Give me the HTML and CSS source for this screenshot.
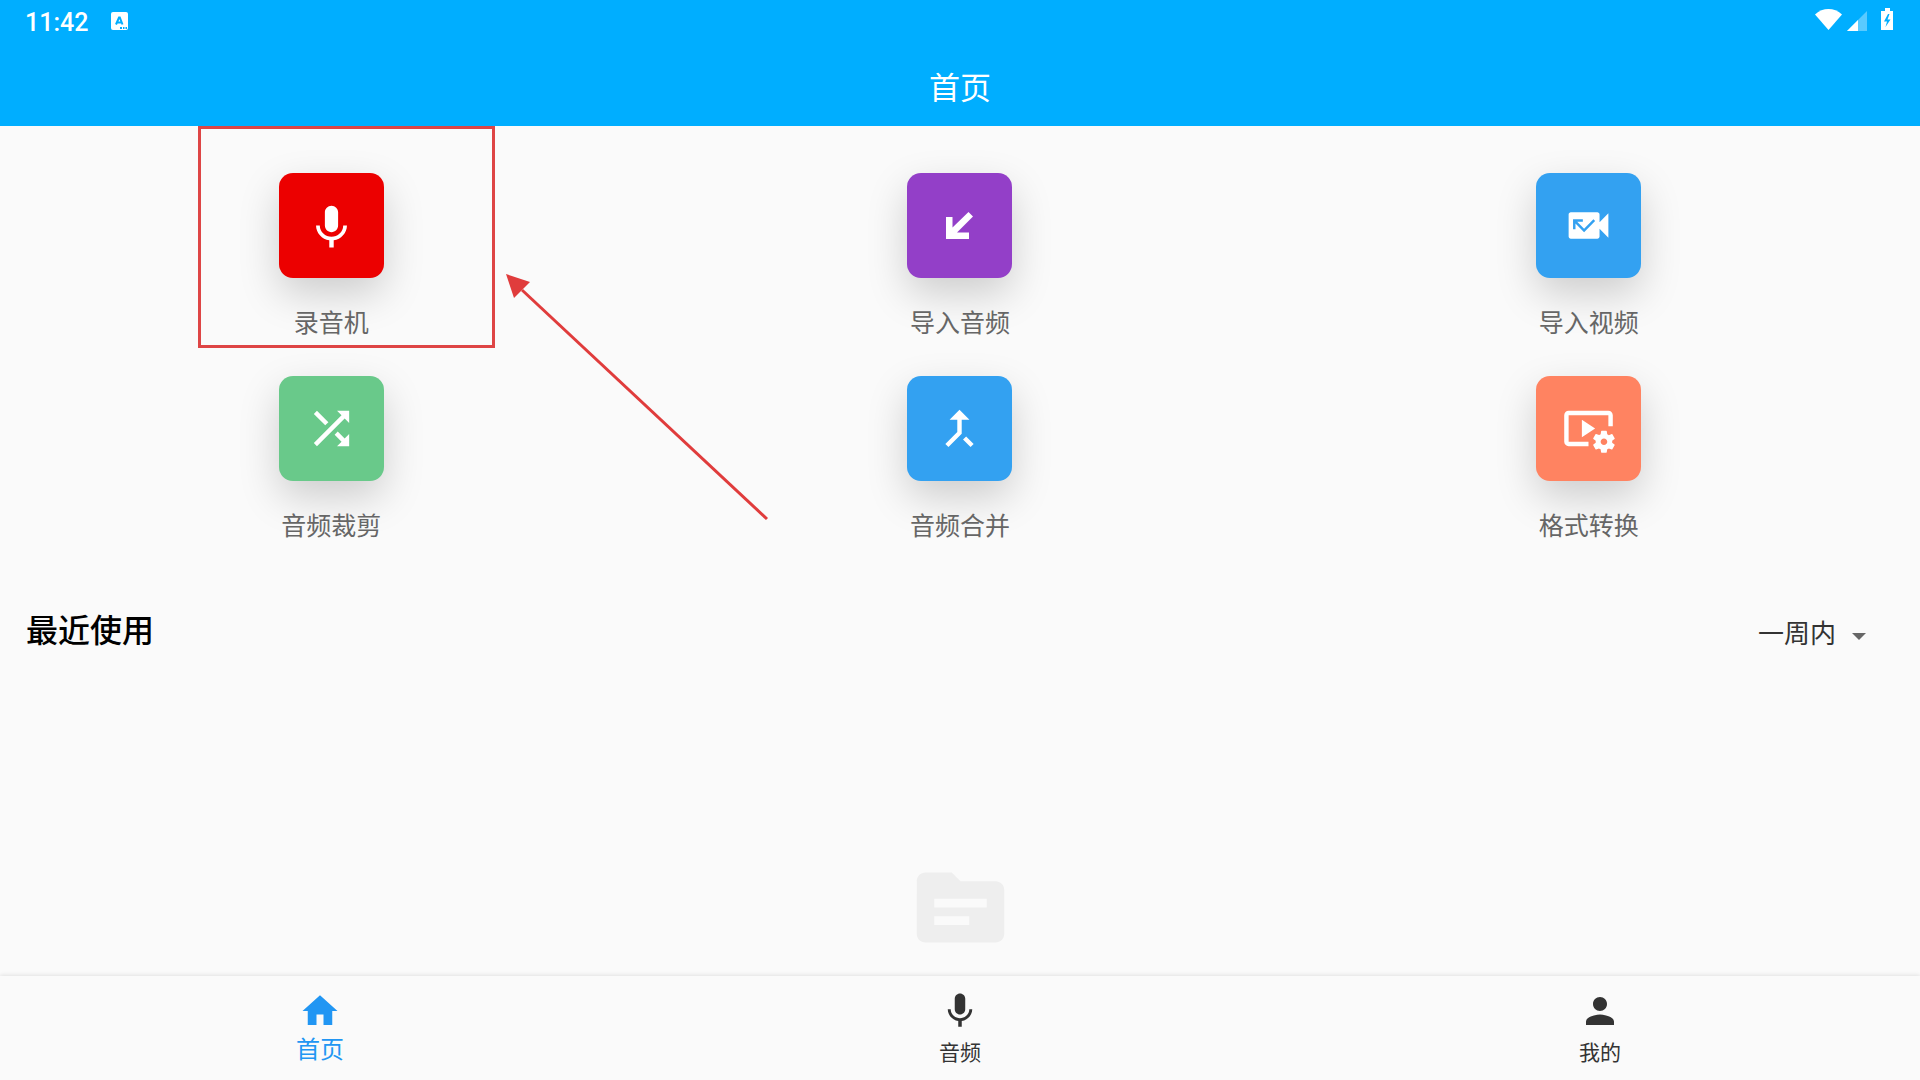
FILE: index.html
```html
<!DOCTYPE html>
<html lang="zh-CN">
<head>
<meta charset="utf-8">
<meta name="viewport" content="width=device-width, initial-scale=1">
<title>首页</title>
<link rel="stylesheet" href="styles.css">
</head>
<body>
<div class="app">
  <header class="header">
    <div class="status">
      <div class="status-group">
        <span class="time">11:42</span>
        <svg class="badge" viewBox="0 0 17 18" aria-hidden="true"><rect width="17" height="18" rx="2" fill="#fff"/><path d="M5 12.5L8 5.500h.8L11.500 12.500M6 10.500h4.500" fill="none" stroke="#00aeff" stroke-width="2"/><path d="M9 15h2v2H9zM12 15h1.500v2H12zM14.500 15H16v2h-1.500z" fill="#00aeff"/></svg>
      </div>
      <svg class="signals" viewBox="0 0 80 24" aria-hidden="true">
        <path d="M0 6.500C8 -.8 19 -.8 27 6.500L13.500 22z" fill="#fff"/>
        <path d="M52 3v20H32z" fill="#fff" opacity=".35"/><path d="M43 12v11H32z" fill="#fff"/>
        <path d="M70 0h5v3h3v19H66V3h4z" fill="#fff"/><path d="M73 6l-4 7.500h3L70.500 19l5-7.500h-3L74.500 6z" fill="#00aeff"/>
      </svg>
    </div>
    <h1 class="title">首页</h1>
  </header>

  <main class="main">
    <div class="tools">
      <button class="tool" type="button">
        <span class="tile red"><svg viewBox="0 0 24 24"><path d="M12 15c1.660 0 2.990-1.340 2.990-3L15 6c0-1.660-1.340-3-3-3S9 4.340 9 6v6c0 1.660 1.340 3 3 3zm5.300-3c0 3-2.540 5.100-5.300 5.100S6.700 15 6.700 12H5c0 3.420 2.720 6.230 6 6.720V22h2v-3.280c3.280-.48 6-3.300 6-6.720h-1.700z"/></svg></span>
        <span class="tool-name">录音机</span>
      </button>
      <button class="tool" type="button">
        <span class="tile purple"><svg viewBox="26 26 53 53"><path d="M39 44h6.500v10.500L61.500 39l4.500 4.500-16 16h12V66H39z"/></svg></span>
        <span class="tool-name">导入音频</span>
      </button>
      <button class="tool" type="button">
        <span class="tile blue"><svg viewBox="0 0 24 24"><path d="M17 10.500V7c0-.55-.45-1-1-1H4c-.55 0-1 .45-1 1v10c0 .55.45 1 1 1h12c.55 0 1-.45 1-1v-3.500l4 4v-11l-4 4zM10 15l-3.890-3.890v2.550H5V9.220h4.440v1.110H6.890l3.110 3.100 4.220-4.220.78.790L10 15z"/></svg></span>
        <span class="tool-name">导入视频</span>
      </button>
      <button class="tool" type="button">
        <span class="tile green"><svg viewBox="0 0 24 24"><path d="M10.590 9.170L5.410 4 4 5.410l5.170 5.170 1.420-1.410zM14.500 4l2.040 2.040L4 18.590 5.410 20 17.960 7.460 20 9.500V4h-5.500zm.33 9.410l-1.410 1.410 3.130 3.130L14.500 20H20v-5.500l-2.040 2.040-3.130-3.130z"/></svg></span>
        <span class="tool-name">音频裁剪</span>
      </button>
      <button class="tool" type="button">
        <span class="tile blue"><svg viewBox="0 0 24 24"><path d="M17 20.410L18.410 19 15 15.590 13.590 17 17 20.410zM7.500 8H11v5.590L5.590 19 7 20.410l6-6V8h3.500L12 3.500 7.500 8z"/></svg></span>
        <span class="tool-name">音频合并</span>
      </button>
      <button class="tool" type="button">
        <span class="tile orange"><svg viewBox="0 0 24 24"><path d="M3 6h18v5h2V6c0-1.100-.9-2-2-2H3c-1.100 0-2 .9-2 2v12c0 1.100.9 2 2 2h9v-2H3V6zM15 12l-6-4v8zM22.710 18.430c.03-.29.04-.58.01-.86l1.070-.85c.1-.08.12-.21.06-.32l-1.030-1.790c-.06-.11-.19-.15-.31-.11l-1.280.5c-.23-.17-.48-.31-.75-.42l-.2-1.360c-.02-.13-.12-.22-.25-.22h-2.070c-.12 0-.23.09-.25.21l-.2 1.360c-.26.11-.51.26-.74.42l-1.280-.5c-.12-.05-.25 0-.31.11l-1.030 1.790c-.06.11-.04.24.06.32l1.070.86c-.03.29-.04.58-.01.86l-1.070.85c-.1.08-.12.21-.06.32l1.030 1.790c.06.11.19.15.31.11l1.270-.5c.23.17.48.31.75.42l.2 1.360c.02.12.12.21.25.21h2.070c.12 0 .23-.09.25-.21l.2-1.360c.26-.11.51-.26.74-.42l1.280.5c.12.05.25 0 .31-.11l1.030-1.790c.06-.11.04-.24-.06-.32l-1.070-.85zM19 19.500c-.83 0-1.500-.67-1.500-1.500s.67-1.500 1.500-1.500 1.500.67 1.500 1.500-.67 1.500-1.500 1.500z"/></svg></span>
        <span class="tool-name">格式转换</span>
      </button>
    </div>

    <section class="recent">
      <div class="recent-head">
        <h2 class="recent-title">最近使用</h2>
        <div class="range">
          <select class="range-select" aria-label="最近使用"><option>一周内</option></select>
          <svg class="range-arrow" viewBox="0 0 14 7" aria-hidden="true"><path d="M0 0h14L7 7z"/></svg>
        </div>
      </div>
      <svg class="empty" viewBox="0 0 24 24" aria-hidden="true"><path d="M20 6h-8l-2-2H4c-1.100 0-1.990.9-1.990 2L2 18c0 1.100.9 2 2 2h16c1.100 0 2-.9 2-2V8c0-1.100-.9-2-2-2zm-6 10H6v-2h8v2zm4-4H6v-2h12v2z"/></svg>
    </section>

    <div class="marker"></div>
    <svg class="pointer" viewBox="0 0 264 248" aria-hidden="true"><path d="M16 16L261 245" stroke="#e03c3c" stroke-width="3"/><path d="M0 0l24 8L8 24z" fill="#e03c3c"/></svg>
  </main>

  <nav class="nav">
    <a class="nav-item active" href="#home"><svg viewBox="0 0 24 24"><path d="M10 20v-6h4v6h5v-8h3L12 3 2 12h3v8z"/></svg><span>首页</span></a>
    <a class="nav-item" href="#audio"><svg viewBox="0 0 24 24"><path d="M12 14c1.660 0 2.990-1.340 2.990-3L15 5c0-1.660-1.340-3-3-3S9 3.340 9 5v6c0 1.660 1.340 3 3 3zm5.300-3c0 3-2.540 5.100-5.300 5.100S6.700 14 6.700 11H5c0 3.410 2.720 6.230 6 6.720V21h2v-3.280c3.280-.48 6-3.300 6-6.720h-1.700z"/></svg><span>音频</span></a>
    <a class="nav-item" href="#mine"><svg viewBox="0 0 24 24"><path d="M12 12c2.210 0 4-1.790 4-4s-1.790-4-4-4-4 1.790-4 4 1.790 4 4 4zm0 2c-2.670 0-8 1.340-8 4v2h16v-2c0-2.660-5.330-4-8-4z"/></svg><span>我的</span></a>
  </nav>
</div>
</body>
</html>
```
FILE: styles.css
```css
* {
  box-sizing: border-box;
}

body {
  margin: 0;
  background: #fafafa;
  color: #333;
  font-family: Roboto, "Noto Sans CJK SC", sans-serif;
}

.app {
  display: flex;
  flex-direction: column;
  height: 100vh;
}

.header {
  flex: none;
  background: #00aeff;
  color: #fff;
}

.status {
  display: flex;
  justify-content: space-between;
  align-items: center;
  height: 42px;
  padding: 0 25px;
}

.status-group {
  display: flex;
  align-items: center;
  gap: 23px;
}

.time {
  padding-top: 4px;
  font-size: 25px;
  line-height: 38px;
  font-weight: 500;
}

.badge {
  width: 17px;
  height: 18px;
}

.signals {
  width: 80px;
  height: 24px;
  margin-bottom: 2px;
}

.title {
  margin: 0;
  padding-top: 10px;
  font-size: 31px;
  line-height: 74px;
  font-weight: 400;
  text-align: center;
}

.main {
  position: relative;
  flex: 1;
  min-height: 0;
  overflow: hidden;
}

.tools {
  display: grid;
  grid-template-columns: repeat(3, 1fr);
  row-gap: 34px;
  padding: 47px 17px 0;
}

.tool {
  display: flex;
  flex-direction: column;
  align-items: center;
  gap: 28px;
  padding: 0;
  border: 0;
  background: none;
  color: #666;
  font: inherit;
}

.tile {
  display: flex;
  align-items: center;
  justify-content: center;
  width: 105px;
  height: 105px;
  border-radius: 14px;
  box-shadow: 0 16px 40px rgba(0, 0, 0, 0.18);
}

.tile svg {
  width: 53px;
  height: 53px;
  fill: #fff;
}

.red { background: #ec0000; }
.purple { background: #933fc8; }
.blue { background: #33a1f1; }
.green { background: #69c98a; }
.orange { background: #ff8361; }

.tool-name {
  font-size: 25px;
  line-height: 36px;
}

.recent {
  display: flex;
  flex-direction: column;
  align-items: center;
  gap: 200px;
  padding: 62px 26px 0;
}

.recent-head {
  display: flex;
  align-items: center;
  justify-content: space-between;
  width: 100%;
}

.recent-title {
  margin: 0;
  color: #000;
  font-size: 32px;
  line-height: 48px;
  font-weight: 500;
}

.range {
  display: flex;
  align-items: center;
  gap: 15px;
  padding: 6px 28px 0 0;
}

.range-select {
  appearance: none;
  padding: 0;
  border: 0;
  background: none;
  color: #333;
  font: inherit;
  font-size: 26px;
  line-height: 40px;
}

.range-arrow {
  width: 14px;
  height: 7px;
  margin-top: 4px;
  fill: #666;
}

.empty {
  width: 105px;
  height: 105px;
  fill: #eee;
}

.marker {
  position: absolute;
  top: 0;
  left: 198px;
  width: 297px;
  height: 222px;
  border: 3px solid #de4545;
}

.pointer {
  position: absolute;
  top: 148px;
  left: 506px;
  width: 264px;
  height: 248px;
}

.nav {
  position: relative;
  display: grid;
  flex: none;
  grid-template-columns: repeat(3, 1fr);
  height: 104px;
  background: #fafafa;
  box-shadow: 0 -1px 4px rgba(0, 0, 0, 0.1);
}

.nav-item {
  display: flex;
  flex-direction: column;
  align-items: center;
  padding-top: 14px;
  color: #333;
  font-size: 21px;
  line-height: 42px;
  text-decoration: none;
}

.nav-item svg {
  width: 42px;
  height: 42px;
  fill: currentColor;
}

.nav-item.active {
  color: #2196f3;
  font-size: 24px;
  line-height: 36px;
}
```
